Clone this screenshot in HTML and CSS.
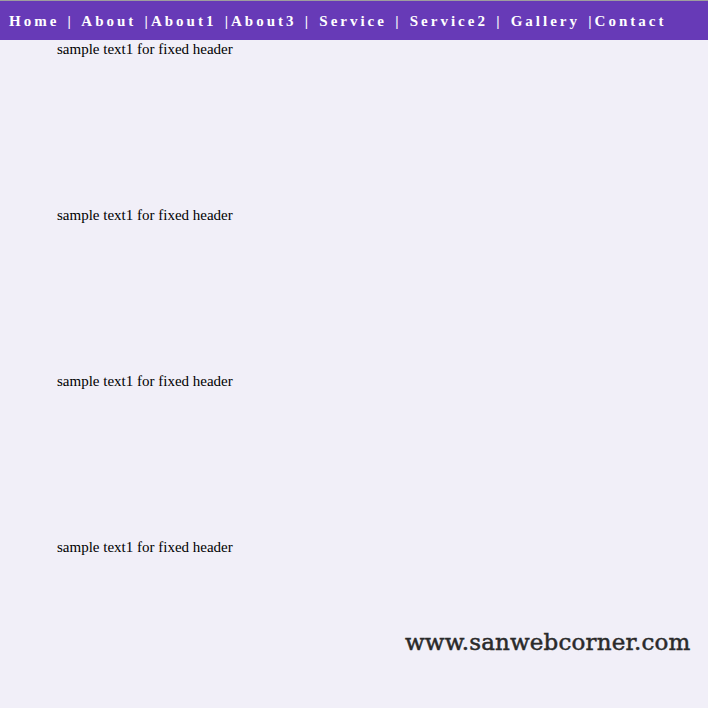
FILE: index.html
```html
<!DOCTYPE html>
<html>
<head>
<meta charset="utf-8">
<link rel="stylesheet" href="styles.css">
</head>
<body>
<header class="header"><nav class="nav"><a class="nav-link" href="#">Home </a><span class="sep">| </span><a class="nav-link" href="#">About </a><span class="sep">|</span><a class="nav-link" href="#">About1 </a><span class="sep">|</span><a class="nav-link" href="#">About3 </a><span class="sep">| </span><a class="nav-link" href="#">Service </a><span class="sep">| </span><a class="nav-link" href="#">Service2 </a><span class="sep">| </span><a class="nav-link" href="#">Gallery </a><span class="sep">|</span><a class="nav-link" href="#">Contact</a></nav></header>
<main class="content">
  <p class="sample">sample text1 for fixed header</p>
  <p class="sample">sample text1 for fixed header</p>
  <p class="sample">sample text1 for fixed header</p>
  <p class="sample">sample text1 for fixed header</p>
</main>
<div class="watermark">www.sanwebcorner.com</div>
</body>
</html>
```
FILE: styles.css
```css
html, body {
  margin: 0;
  padding: 0;
}
body {
  background: #f1eff8;
  font-family: "Liberation Serif", "Times New Roman", serif;
  height: 708px;
  overflow: hidden;
  position: relative;
  border-top: 1px solid #9e9e9e;
}
.header {
  background: #673ab7;
  height: 39px;
  display: flex;
  align-items: center;
  padding-left: 9px;
}
.nav {
  white-space: pre;
  font-weight: bold;
  font-size: 15px;
  letter-spacing: 3px;
  word-spacing: 1.5px;
  color: #fff;
  padding-top: 1px;
}
.nav-link {
  color: #fff;
  text-decoration: none;
}
.sep {
  color: #fff;
}
.content {
  padding-left: 57px;
  padding-top: 1px;
}
.sample {
  margin: 0;
  height: 166px;
  font-size: 15px;
  line-height: 17px;
  color: #000;
}
.watermark {
  position: absolute;
  left: 405px;
  top: 628px;
  font-family: "DejaVu Serif", serif;
  font-size: 23px;
  letter-spacing: 0.15px;
  -webkit-text-stroke: 0.5px #2a2a2a;
  color: #2a2a2a;
}
```
